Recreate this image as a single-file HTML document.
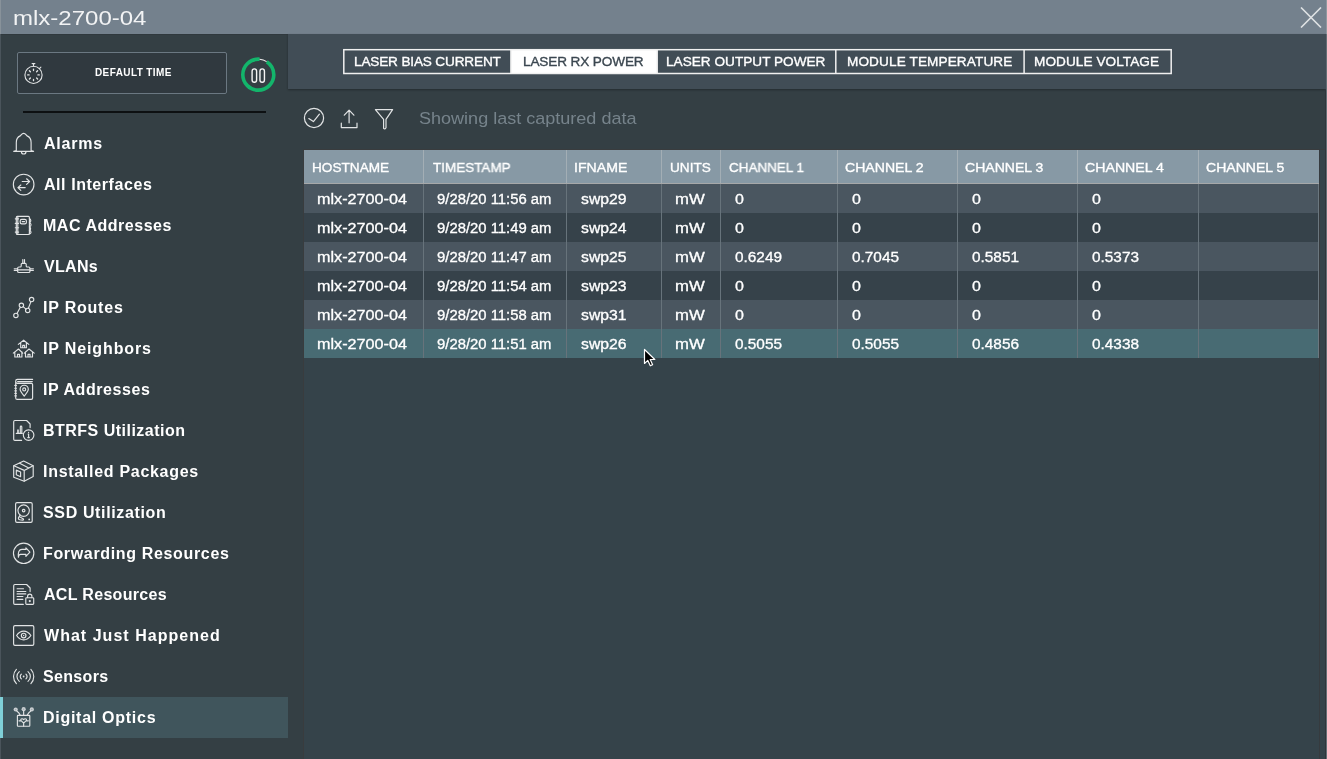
<!DOCTYPE html>
<html><head><meta charset="utf-8">
<style>
*{margin:0;padding:0;box-sizing:border-box}
html,body{width:1327px;height:759px;overflow:hidden;background:#343f44;font-family:"Liberation Sans",sans-serif;color:#fff}
div,svg{position:absolute}
.t{white-space:nowrap;line-height:20px;will-change:transform}
</style></head><body>

<div style="left:0;top:0;width:1327px;height:34px;background:#74818d"></div>
<div style="left:0;top:0;width:1px;height:34px;background:#88929a"></div>
<div style="left:0;top:34px;width:1327px;height:1px;background:#30393e"></div>
<div id="title" class="t" style="left:13.46px;top:7.82px;font-size:21px;font-weight:400;color:#f2f3f4;transform:scaleX(1.1435);transform-origin:0 0">mlx-2700-04</div>
<svg style="left:1300px;top:7px" width="22" height="21"><path d="M1 0.5L21 20.5M21 0.5L1 20.5" stroke="#dfe2e4" stroke-width="1.6"/></svg>
<div style="left:17px;top:52px;width:210px;height:42px;border:1px solid #6b7882;border-radius:2px;background:#30393f"></div>
<svg style="left:20px;top:60px" width="28" height="28"><g fill="none" stroke="#e2e4e5" stroke-width="1.1" stroke-linecap="round"><circle cx="13.5" cy="14.9" r="8.6"/><path d="M13.5 6.2V3.8M12.1 3.6H14.9M19.4 8.6L20.9 7.1"/><path d="M13.5 9.1V10.5M13.5 19.3V20.7M7.7 14.9H9.1M17.9 14.9H19.3M9.4 10.8L10.4 11.8M16.6 18L17.6 19M17.6 10.8L16.6 11.8M10.4 18L9.4 19" stroke-width="1.3"/></g></svg>
<div id="dt" class="t" style="left:94.80px;top:63.03px;font-size:10px;font-weight:700;color:#ffffff;letter-spacing:0.400px">DEFAULT TIME</div>
<svg style="left:238px;top:55px" width="40" height="40"><circle cx="20.3" cy="19.65" r="15.5" fill="none" stroke="#13b56b" stroke-width="3.6" stroke-dasharray="89.8 7.6" stroke-dashoffset="-8.93" transform="rotate(-90 20.3 19.65)"/><path d="M21.6 4.2A15.5 15.5 0 0 1 28.6 6.6" stroke="#eeeeee" stroke-width="1.1" fill="none"/><rect x="14.1" y="13.9" width="4.5" height="13.4" rx="2.25" fill="none" stroke="#f5f5f5" stroke-width="1.4"/><rect x="21.95" y="13.9" width="4.5" height="13.4" rx="2.25" fill="none" stroke="#f5f5f5" stroke-width="1.4"/></svg>
<div style="left:23px;top:111px;width:243px;height:2px;background:#0d1012"></div>
<svg style="left:0;top:123px" width="40" height="41"><path fill="none" stroke="#e2e4e5" stroke-width="1.15" stroke-linecap="round" stroke-linejoin="round" d="M16.3 27.6V19.5C16.3 15.8 18 13.8 20.2 12.9C21.2 12.4 21.6 10.4 23.65 10.4C25.7 10.4 26.1 12.4 27.1 12.9C29.3 13.8 31.1 15.8 31.1 19.5V27.6L33.6 28.3H13.7L16.3 27.6ZM21.4 28.4A2.3 2.6 0 0 0 26.0 28.4"/></svg>
<div id="side0" class="t" style="left:44.00px;top:133.66px;font-size:16px;font-weight:700;color:#ffffff;letter-spacing:0.800px">Alarms</div>
<svg style="left:0;top:164px" width="40" height="41"><circle fill="none" stroke="#e2e4e5" stroke-width="1.15" stroke-linecap="round" stroke-linejoin="round" cx="23.65" cy="20.5" r="10.3"/><path fill="none" stroke="#e2e4e5" stroke-width="1.15" stroke-linecap="round" stroke-linejoin="round" d="M22.2 17.5H29.5M26.6 14.8L29.6 17.5L26.6 20.3M25.2 23.6H18M20.8 21L17.9 23.6L20.8 26.3"/></svg>
<div id="side1" class="t" style="left:44.00px;top:174.66px;font-size:16px;font-weight:700;color:#ffffff;letter-spacing:0.562px">All Interfaces</div>
<svg style="left:0;top:205px" width="40" height="41"><rect fill="none" stroke="#e2e4e5" stroke-width="1.15" stroke-linecap="round" stroke-linejoin="round" x="16.3" y="11.4" width="13.1" height="18.1" rx="1"/><path fill="none" stroke="#e2e4e5" stroke-width="1.15" stroke-linecap="round" stroke-linejoin="round" d="M17.8 11.6V29.3M15.3 13.8H18.6M15.3 18.4H18.6M15.3 22.7H18.6M15.3 27.1H18.6"/><path fill="none" stroke="#e2e4e5" stroke-width="1.15" stroke-linecap="round" stroke-linejoin="round" d="M29.4 13.6A2.2 2.2 0 0 1 29.4 17.7A2.1 2.1 0 0 1 29.4 21.8A2.1 2.1 0 0 1 29.4 25.6A1.6 1.6 0 0 1 29.4 28.8"/><rect fill="none" stroke="#e2e4e5" stroke-width="1.15" stroke-linecap="round" stroke-linejoin="round" x="20.2" y="14.4" width="6.2" height="4.4" rx="1.6"/><path fill="none" stroke="#e2e4e5" stroke-width="1.15" stroke-linecap="round" stroke-linejoin="round" d="M22.2 16.6H24.6"/></svg>
<div id="side2" class="t" style="left:43.00px;top:215.66px;font-size:16px;font-weight:700;color:#ffffff;letter-spacing:0.525px">MAC Addresses</div>
<svg style="left:0;top:246px" width="40" height="41"><path fill="none" stroke="#e2e4e5" stroke-width="1.15" stroke-linecap="round" stroke-linejoin="round" d="M14.2 22.8H17.6M14.2 24.5H17.6M29.9 22.8H33.4M29.9 24.5H33.4M22.8 13.6V16.9M24.5 13.6V16.9"/><path fill="none" stroke="#e2e4e5" stroke-width="1.15" stroke-linecap="round" stroke-linejoin="round" d="M19 21H20.2C20.8 21 21.2 20.6 21.2 20V18.3C21.2 17.7 21.6 17.3 22.2 17.3H25.2C25.8 17.3 26.2 17.7 26.2 18.3V20C26.2 20.6 26.6 21 27.2 21H28.6C29.4 21 30 21.6 30 22.4V25.2C30 26 29.4 26.5 28.6 26.5H19C18.2 26.5 17.6 26 17.6 25.2V22.4C17.6 21.6 18.2 21 19 21Z"/><path fill="none" stroke="#e2e4e5" stroke-width="1.15" stroke-linecap="round" stroke-linejoin="round" d="M18.2 23.8H29.4"/></svg>
<div id="side3" class="t" style="left:44.00px;top:256.66px;font-size:16px;font-weight:700;color:#ffffff;letter-spacing:0.325px">VLANs</div>
<svg style="left:0;top:287px" width="40" height="41"><circle fill="none" stroke="#e2e4e5" stroke-width="1.15" stroke-linecap="round" stroke-linejoin="round" cx="15.9" cy="28.4" r="2.2"/><circle fill="none" stroke="#e2e4e5" stroke-width="1.15" stroke-linecap="round" stroke-linejoin="round" cx="21.4" cy="18.3" r="2.2"/><circle fill="none" stroke="#e2e4e5" stroke-width="1.15" stroke-linecap="round" stroke-linejoin="round" cx="27.7" cy="23.4" r="2.2"/><circle fill="none" stroke="#e2e4e5" stroke-width="1.15" stroke-linecap="round" stroke-linejoin="round" cx="31.6" cy="12.5" r="2.2"/><path fill="none" stroke="#e2e4e5" stroke-width="1.15" stroke-linecap="round" stroke-linejoin="round" d="M17 26.5L20.3 20.2M23.1 19.6L26 22.1M28.4 21.3L30.9 14.6"/></svg>
<div id="side4" class="t" style="left:43.00px;top:297.66px;font-size:16px;font-weight:700;color:#ffffff;letter-spacing:0.787px">IP Routes</div>
<svg style="left:0;top:328px" width="40" height="41"><path fill="none" stroke="#e2e4e5" stroke-width="1.15" stroke-linecap="round" stroke-linejoin="round" d="M18.3 16.4L23.65 12.2L28.8 16.4M20.7 14.8V19.7H26.4V14.8M22.7 19.5V17.4H24.6V19.5"/><path fill="none" stroke="#e2e4e5" stroke-width="1.15" stroke-linecap="round" stroke-linejoin="round" d="M13.3 25.1L18.5 21L22.7 25.1M14.8 23.7V29H21.9V23.7M17.5 29V26.3H19.5V29"/><path fill="none" stroke="#e2e4e5" stroke-width="1.15" stroke-linecap="round" stroke-linejoin="round" d="M24.4 25.1L29 21L34.2 25.1M25.5 23.7V29H32.5V23.7M28 29V26.3H30V29"/></svg>
<div id="side5" class="t" style="left:43.00px;top:338.66px;font-size:16px;font-weight:700;color:#ffffff;letter-spacing:0.864px">IP Neighbors</div>
<svg style="left:0;top:369px" width="40" height="41"><path fill="none" stroke="#e2e4e5" stroke-width="1.15" stroke-linecap="round" stroke-linejoin="round" d="M15.7 12.2C15.7 11 16.4 10.4 17.4 10.4H32.6M17.6 12.6H32.3M15.7 12.2V28.9C15.7 29.8 16.3 30.4 17.2 30.4H31.2C32 30.4 32.6 29.8 32.6 29V15.6C32.6 14.9 32.1 14.4 31.4 14.4H17.6C16.6 14.4 15.7 13.6 15.7 12.2"/><path fill="none" stroke="#e2e4e5" stroke-width="1.15" stroke-linecap="round" stroke-linejoin="round" d="M14.8 16.4H16.4M14.8 19.2H16.4M14.8 21.8H16.4M14.8 24.3H16.4M14.8 26.8H16.4"/><path fill="none" stroke="#e2e4e5" stroke-width="1.15" stroke-linecap="round" stroke-linejoin="round" d="M24.2 27.1C22 24.5 20.1 22.4 20.1 20.3A4.1 4.1 0 0 1 28.3 20.3C28.3 22.4 26.4 24.5 24.2 27.1Z"/><circle fill="none" stroke="#e2e4e5" stroke-width="1.15" stroke-linecap="round" stroke-linejoin="round" cx="24.2" cy="20.4" r="1.5"/></svg>
<div id="side6" class="t" style="left:43.00px;top:379.66px;font-size:16px;font-weight:700;color:#ffffff;letter-spacing:0.582px">IP Addresses</div>
<svg style="left:0;top:410px" width="40" height="41"><path fill="none" stroke="#e2e4e5" stroke-width="1.15" stroke-linecap="round" stroke-linejoin="round" d="M21.6 30.4H14.9C14.2 30.4 13.7 29.9 13.7 29.2V11.7C13.7 11 14.2 10.5 14.9 10.5H26.6L30.1 14V17.6"/><path fill="none" stroke="#e2e4e5" stroke-width="1.15" stroke-linecap="round" stroke-linejoin="round" d="M16.3 23.4H22.3M17.9 23.2V20.3M21.8 23.2V17C21.8 16.4 21.4 16.1 21 16.1C20.6 16.1 20.3 16.4 20.3 17V23.2"/><path d="M17.1 19.6H18.9V23H17.1Z" fill="#c9cdd0"/><circle fill="none" stroke="#e2e4e5" stroke-width="1.15" stroke-linecap="round" stroke-linejoin="round" cx="28.6" cy="25.1" r="5.3"/><path fill="none" stroke="#e2e4e5" stroke-width="1.15" stroke-linecap="round" stroke-linejoin="round" d="M28.6 24.1V27.4M27.8 27.6H29.4M28.1 24H28.7M28.6 22.2V22.5"/></svg>
<div id="side7" class="t" style="left:43.00px;top:420.66px;font-size:16px;font-weight:700;color:#ffffff;letter-spacing:0.488px">BTRFS Utilization</div>
<svg style="left:0;top:451px" width="40" height="41"><path fill="none" stroke="#e2e4e5" stroke-width="1.15" stroke-linecap="round" stroke-linejoin="round" d="M23.65 10.1L33.2 14.7V25.6L24.2 30.2L13.7 26.2V14.7Z"/><path fill="none" stroke="#e2e4e5" stroke-width="1.15" stroke-linecap="round" stroke-linejoin="round" d="M13.9 14.8L24.2 19.4L33.1 14.8M24.2 19.4V30.1M19.6 12.3L28.8 16.9"/><path fill="none" stroke="#e2e4e5" stroke-width="1.15" stroke-linecap="round" stroke-linejoin="round" d="M16.3 19.1L20.6 21V25.7L16.3 23.8Z"/></svg>
<div id="side8" class="t" style="left:43.00px;top:461.66px;font-size:16px;font-weight:700;color:#ffffff;letter-spacing:0.706px">Installed Packages</div>
<svg style="left:0;top:492px" width="40" height="41"><rect fill="none" stroke="#e2e4e5" stroke-width="1.15" stroke-linecap="round" stroke-linejoin="round" x="15.6" y="10.6" width="16.6" height="19.7" rx="1.4"/><circle fill="none" stroke="#e2e4e5" stroke-width="1.15" stroke-linecap="round" stroke-linejoin="round" cx="23.65" cy="18.6" r="5.7"/><circle fill="none" stroke="#e2e4e5" stroke-width="1.15" stroke-linecap="round" stroke-linejoin="round" cx="23.65" cy="18.6" r="1.3"/><path fill="none" stroke="#e2e4e5" stroke-width="1.15" stroke-linecap="round" stroke-linejoin="round" d="M20.2 23L18.7 25.2C18.1 26.2 18.4 27.6 19.8 27.8L22.8 28.1C23.6 28.1 23.8 27.2 23.1 26.8L19.4 24.8"/><circle cx="29.2" cy="27.4" r="0.9" fill="#e2e4e5"/></svg>
<div id="side9" class="t" style="left:43.00px;top:502.66px;font-size:16px;font-weight:700;color:#ffffff;letter-spacing:0.643px">SSD Utilization</div>
<svg style="left:0;top:533px" width="40" height="41"><circle fill="none" stroke="#e2e4e5" stroke-width="1.15" stroke-linecap="round" stroke-linejoin="round" cx="23.65" cy="20.3" r="10.2"/><path fill="none" stroke="#e2e4e5" stroke-width="1.15" stroke-linecap="round" stroke-linejoin="round" d="M18.4 24.3C17.9 19.3 18.8 16.4 22 16.4H25.9V14.8L29.9 19.2L25.9 23.4V21.4H20.6C19.3 21.4 18.6 22.5 18.4 24.3Z"/></svg>
<div id="side10" class="t" style="left:43.00px;top:543.66px;font-size:16px;font-weight:700;color:#ffffff;letter-spacing:0.658px">Forwarding Resources</div>
<svg style="left:0;top:574px" width="40" height="41"><path fill="none" stroke="#e2e4e5" stroke-width="1.15" stroke-linecap="round" stroke-linejoin="round" d="M23.3 30.4H14.9C14.2 30.4 13.7 29.9 13.7 29.2V11.7C13.7 11 14.2 10.5 14.9 10.5H26.6L30.1 14V17.6"/><path fill="none" stroke="#e2e4e5" stroke-width="1.15" stroke-linecap="round" stroke-linejoin="round" d="M17.1 14.7H23.5M17.1 17.5H25.8M17.1 19.9H25.8M17.1 22.5H22.9M17.1 25.3H22.9"/><rect fill="none" stroke="#e2e4e5" stroke-width="1.15" stroke-linecap="round" stroke-linejoin="round" x="25.8" y="23.7" width="7.9" height="6.6" rx="0.8"/><path fill="none" stroke="#e2e4e5" stroke-width="1.15" stroke-linecap="round" stroke-linejoin="round" d="M27.6 23.6V22.2A2.15 2.15 0 0 1 31.9 22.2V23.6"/><circle cx="29.8" cy="27.1" r="1.1" fill="#e2e4e5"/></svg>
<div id="side11" class="t" style="left:44.00px;top:584.66px;font-size:16px;font-weight:700;color:#ffffff;letter-spacing:0.317px">ACL Resources</div>
<svg style="left:0;top:615px" width="40" height="41"><rect fill="none" stroke="#e2e4e5" stroke-width="1.15" stroke-linecap="round" stroke-linejoin="round" x="13.6" y="10.6" width="20.2" height="19.8" rx="1.4"/><path fill="none" stroke="#e2e4e5" stroke-width="1.15" stroke-linecap="round" stroke-linejoin="round" d="M16.6 20.5C18.6 17.5 21 16.1 23.7 16.1C26.4 16.1 28.8 17.5 30.9 20.5C28.8 23.5 26.4 24.9 23.7 24.9C21 24.9 18.6 23.5 16.6 20.5Z"/><circle fill="none" stroke="#e2e4e5" stroke-width="1.15" stroke-linecap="round" stroke-linejoin="round" cx="23.65" cy="20.5" r="2.3"/><circle cx="23.65" cy="20.5" r="0.7" fill="#e2e4e5"/></svg>
<div id="side12" class="t" style="left:44.00px;top:625.66px;font-size:16px;font-weight:700;color:#ffffff;letter-spacing:1.029px">What Just Happened</div>
<svg style="left:0;top:656px" width="40" height="41"><path fill="none" stroke="#e2e4e5" stroke-width="1.15" stroke-linecap="round" stroke-linejoin="round" d="M16.4 13.4A10.2 10.2 0 0 0 16.4 27.6M30.9 13.4A10.2 10.2 0 0 1 30.9 27.6M19.3 15.6A6.3 6.3 0 0 0 19.3 25.4M28 15.6A6.3 6.3 0 0 1 28 25.4M21.3 18.2A3 3 0 0 0 21.3 22.8M26 18.2A3 3 0 0 1 26 22.8"/><circle cx="23.65" cy="20.5" r="0.9" fill="#e2e4e5"/></svg>
<div id="side13" class="t" style="left:43.00px;top:666.66px;font-size:16px;font-weight:700;color:#ffffff;letter-spacing:0.333px">Sensors</div>
<div style="left:0;top:697px;width:288px;height:41px;background:#40555c"></div>
<div style="left:0;top:697px;width:3px;height:41px;background:#7fd0d8"></div>
<svg style="left:0;top:697px" width="40" height="41"><rect fill="none" stroke="#e2e4e5" stroke-width="1.15" stroke-linecap="round" stroke-linejoin="round" x="17.4" y="18.3" width="12.4" height="10.9" rx="0.6"/><circle cx="15.7" cy="12.5" r="2.1" fill="#c9ced1"/><circle cx="23.65" cy="12.2" r="2.1" fill="#c9ced1"/><circle cx="31.8" cy="12.4" r="2.1" fill="#c9ced1"/><circle cx="15.7" cy="12.5" r="0.6" fill="#9aa5aa"/><circle cx="23.65" cy="12.2" r="0.6" fill="#9aa5aa"/><circle cx="31.8" cy="12.4" r="0.6" fill="#9aa5aa"/><path fill="none" stroke="#e2e4e5" stroke-width="1.15" stroke-linecap="round" stroke-linejoin="round" d="M16.7 13.9C18.5 15 19.6 16.5 20.2 18.2M23.65 13.9V18.2M30.8 13.9C29 15 27.9 16.5 27.2 18.2"/><path fill="none" stroke="#e2e4e5" stroke-width="1.15" stroke-linecap="round" stroke-linejoin="round" d="M19 23.8H21.1M26.2 23.8H28.4M23.65 26.2V29.1M23.65 26.2L21.1 23.6C20.5 22.7 21 21.7 22 21.7C22.8 21.7 23.3 22.1 23.65 22.6C24 22.1 24.5 21.7 25.3 21.7C26.3 21.7 26.8 22.7 26.2 23.6Z"/></svg>
<div id="side14" class="t" style="left:43.00px;top:707.66px;font-size:16px;font-weight:700;color:#ffffff;letter-spacing:0.723px">Digital Optics</div>
<div style="left:0;top:34px;width:1px;height:663px;background:#4a545b"></div>
<div style="left:0;top:738px;width:1px;height:21px;background:#4a545b"></div>
<div style="left:288px;top:34px;width:1038px;height:55px;background:#414d56;box-shadow:0 1px 2px rgba(0,0,0,0.32)"></div>
<div id="tab0" class="t" style="left:353.60px;top:51.69px;font-size:13.6px;font-weight:400;color:#ffffff;letter-spacing:-0.159px;-webkit-text-stroke:0.35px #ffffff">LASER BIAS CURRENT</div>
<div style="left:511px;top:49px;width:146px;height:25px;background:#fff"></div>
<div id="tab1" class="t" style="left:523.10px;top:51.69px;font-size:13.6px;font-weight:400;color:#3b4750;letter-spacing:-0.131px;-webkit-text-stroke:0.35px #3b4750">LASER RX POWER</div>
<div id="tab2" class="t" style="left:665.90px;top:51.69px;font-size:13.6px;font-weight:400;color:#ffffff;letter-spacing:0.018px;-webkit-text-stroke:0.35px #ffffff">LASER OUTPUT POWER</div>
<div id="tab3" class="t" style="left:846.60px;top:51.69px;font-size:13.6px;font-weight:400;color:#ffffff;letter-spacing:0.112px;-webkit-text-stroke:0.35px #ffffff">MODULE TEMPERATURE</div>
<div id="tab4" class="t" style="left:1034.40px;top:51.69px;font-size:13.6px;font-weight:400;color:#ffffff;letter-spacing:0.069px;-webkit-text-stroke:0.35px #ffffff">MODULE VOLTAGE</div>
<svg style="left:340px;top:46px" width="836" height="32"><g fill="none" stroke="#f0f0f0" stroke-width="1.5"><rect x="3.8" y="3.7" width="827.4" height="23.8"/><path d="M170.9 3.7V27.5M317.2 3.7V27.5M495.8 3.7V27.5M684.1 3.7V27.5"/></g></svg>
<svg style="left:298px;top:100px" width="110" height="34"><g fill="none" stroke="#e2e4e5" stroke-width="1.2" stroke-linecap="round" stroke-linejoin="round"><circle cx="16" cy="18" r="9.6"/><path d="M10.8 18.6L15.4 21.6L21.4 14.2"/><path d="M51.1 22.8V10.4M46.3 15.2L51.1 10.2L55.9 15.2M43.3 23.2V27.6H59V23.2"/><path d="M77.4 9.6H94.6L88 19.4V27.8Q86.9 29.6 85.6 28.4V19.4Z"/></g></svg>
<div id="msg" class="t" style="left:419.23px;top:108.58px;font-size:16.8px;font-weight:400;color:#76838b;transform:scaleX(1.0743);transform-origin:0 0">Showing last captured data</div>
<div style="left:303px;top:149px;width:1022px;height:610px;background:#35434a;border-left:1px solid #393c3e;border-top:1px solid #393c3e"></div>
<div style="left:304px;top:150px;width:1015px;height:34px;background:#8799a5;border-bottom:1px solid #a6a8a9"></div>
<div id="hdr0" class="t" style="left:312.00px;top:157.89px;font-size:13.6px;font-weight:400;color:#ffffff;transform:scaleX(1.0013);transform-origin:0 0;-webkit-text-stroke:0.35px #ffffff">HOSTNAME</div>
<div id="hdr1" class="t" style="left:432.50px;top:157.89px;font-size:13.6px;font-weight:400;color:#ffffff;transform:scaleX(0.9910);transform-origin:0 0;-webkit-text-stroke:0.35px #ffffff">TIMESTAMP</div>
<div id="hdr2" class="t" style="left:574.46px;top:157.89px;font-size:13.6px;font-weight:400;color:#ffffff;transform:scaleX(1.0380);transform-origin:0 0;-webkit-text-stroke:0.35px #ffffff">IFNAME</div>
<div id="hdr3" class="t" style="left:669.91px;top:157.89px;font-size:13.6px;font-weight:400;color:#ffffff;transform:scaleX(0.9897);transform-origin:0 0;-webkit-text-stroke:0.35px #ffffff">UNITS</div>
<div id="hdr4" class="t" style="left:728.81px;top:157.89px;font-size:13.6px;font-weight:400;color:#ffffff;transform:scaleX(0.9892);transform-origin:0 0;-webkit-text-stroke:0.35px #ffffff">CHANNEL 1</div>
<div id="hdr5" class="t" style="left:845.36px;top:157.89px;font-size:13.6px;font-weight:400;color:#ffffff;transform:scaleX(1.0365);transform-origin:0 0;-webkit-text-stroke:0.35px #ffffff">CHANNEL 2</div>
<div id="hdr6" class="t" style="left:965.27px;top:157.89px;font-size:13.6px;font-weight:400;color:#ffffff;transform:scaleX(1.0324);transform-origin:0 0;-webkit-text-stroke:0.35px #ffffff">CHANNEL 3</div>
<div id="hdr7" class="t" style="left:1085.36px;top:157.89px;font-size:13.6px;font-weight:400;color:#ffffff;transform:scaleX(1.0413);transform-origin:0 0;-webkit-text-stroke:0.35px #ffffff">CHANNEL 4</div>
<div id="hdr8" class="t" style="left:1206.47px;top:157.89px;font-size:13.6px;font-weight:400;color:#ffffff;transform:scaleX(1.0324);transform-origin:0 0;-webkit-text-stroke:0.35px #ffffff">CHANNEL 5</div>
<div style="left:304px;top:184px;width:1015px;height:29px;background:#4a5660"></div>
<div id="c0_0" class="t" style="left:317.14px;top:188.75px;font-size:14px;font-weight:400;color:#ffffff;transform:scaleX(1.1558);transform-origin:0 0;-webkit-text-stroke:0.3px #ffffff">mlx-2700-04</div>
<div id="c0_1" class="t" style="left:436.74px;top:188.75px;font-size:14px;font-weight:400;color:#ffffff;transform:scaleX(1.0604);transform-origin:0 0;-webkit-text-stroke:0.3px #ffffff">9/28/20 11:56 am</div>
<div id="c0_2" class="t" style="left:580.80px;top:188.75px;font-size:14px;font-weight:400;color:#ffffff;transform:scaleX(1.1250);transform-origin:0 0;-webkit-text-stroke:0.3px #ffffff">swp29</div>
<div id="c0_3" class="t" style="left:675.00px;top:188.75px;font-size:14px;font-weight:400;color:#ffffff;transform:scaleX(1.1958);transform-origin:0 0;-webkit-text-stroke:0.3px #ffffff">mW</div>
<div id="c0_4" class="t" style="left:735.10px;top:188.75px;font-size:14px;font-weight:400;color:#ffffff;transform:scaleX(1.1429);transform-origin:0 0;-webkit-text-stroke:0.3px #ffffff">0</div>
<div id="c0_5" class="t" style="left:851.70px;top:188.75px;font-size:14px;font-weight:400;color:#ffffff;transform:scaleX(1.1429);transform-origin:0 0;-webkit-text-stroke:0.3px #ffffff">0</div>
<div id="c0_6" class="t" style="left:971.60px;top:188.75px;font-size:14px;font-weight:400;color:#ffffff;transform:scaleX(1.1429);transform-origin:0 0;-webkit-text-stroke:0.3px #ffffff">0</div>
<div id="c0_7" class="t" style="left:1091.70px;top:188.75px;font-size:14px;font-weight:400;color:#ffffff;transform:scaleX(1.1429);transform-origin:0 0;-webkit-text-stroke:0.3px #ffffff">0</div>
<div style="left:304px;top:213px;width:1015px;height:29px;background:#36424a"></div>
<div id="c1_0" class="t" style="left:317.14px;top:217.75px;font-size:14px;font-weight:400;color:#ffffff;transform:scaleX(1.1558);transform-origin:0 0;-webkit-text-stroke:0.3px #ffffff">mlx-2700-04</div>
<div id="c1_1" class="t" style="left:436.74px;top:217.75px;font-size:14px;font-weight:400;color:#ffffff;transform:scaleX(1.0604);transform-origin:0 0;-webkit-text-stroke:0.3px #ffffff">9/28/20 11:49 am</div>
<div id="c1_2" class="t" style="left:580.80px;top:217.75px;font-size:14px;font-weight:400;color:#ffffff;transform:scaleX(1.1250);transform-origin:0 0;-webkit-text-stroke:0.3px #ffffff">swp24</div>
<div id="c1_3" class="t" style="left:675.00px;top:217.75px;font-size:14px;font-weight:400;color:#ffffff;transform:scaleX(1.1958);transform-origin:0 0;-webkit-text-stroke:0.3px #ffffff">mW</div>
<div id="c1_4" class="t" style="left:735.10px;top:217.75px;font-size:14px;font-weight:400;color:#ffffff;transform:scaleX(1.1429);transform-origin:0 0;-webkit-text-stroke:0.3px #ffffff">0</div>
<div id="c1_5" class="t" style="left:851.70px;top:217.75px;font-size:14px;font-weight:400;color:#ffffff;transform:scaleX(1.1429);transform-origin:0 0;-webkit-text-stroke:0.3px #ffffff">0</div>
<div id="c1_6" class="t" style="left:971.60px;top:217.75px;font-size:14px;font-weight:400;color:#ffffff;transform:scaleX(1.1429);transform-origin:0 0;-webkit-text-stroke:0.3px #ffffff">0</div>
<div id="c1_7" class="t" style="left:1091.70px;top:217.75px;font-size:14px;font-weight:400;color:#ffffff;transform:scaleX(1.1429);transform-origin:0 0;-webkit-text-stroke:0.3px #ffffff">0</div>
<div style="left:304px;top:242px;width:1015px;height:29px;background:#4a5660"></div>
<div id="c2_0" class="t" style="left:317.14px;top:246.75px;font-size:14px;font-weight:400;color:#ffffff;transform:scaleX(1.1558);transform-origin:0 0;-webkit-text-stroke:0.3px #ffffff">mlx-2700-04</div>
<div id="c2_1" class="t" style="left:436.74px;top:246.75px;font-size:14px;font-weight:400;color:#ffffff;transform:scaleX(1.0604);transform-origin:0 0;-webkit-text-stroke:0.3px #ffffff">9/28/20 11:47 am</div>
<div id="c2_2" class="t" style="left:580.80px;top:246.75px;font-size:14px;font-weight:400;color:#ffffff;transform:scaleX(1.1250);transform-origin:0 0;-webkit-text-stroke:0.3px #ffffff">swp25</div>
<div id="c2_3" class="t" style="left:675.00px;top:246.75px;font-size:14px;font-weight:400;color:#ffffff;transform:scaleX(1.1958);transform-origin:0 0;-webkit-text-stroke:0.3px #ffffff">mW</div>
<div id="c2_4" class="t" style="left:735.10px;top:246.75px;font-size:14px;font-weight:400;color:#ffffff;transform:scaleX(1.0976);transform-origin:0 0;-webkit-text-stroke:0.3px #ffffff">0.6249</div>
<div id="c2_5" class="t" style="left:851.70px;top:246.75px;font-size:14px;font-weight:400;color:#ffffff;transform:scaleX(1.0976);transform-origin:0 0;-webkit-text-stroke:0.3px #ffffff">0.7045</div>
<div id="c2_6" class="t" style="left:971.60px;top:246.75px;font-size:14px;font-weight:400;color:#ffffff;transform:scaleX(1.0976);transform-origin:0 0;-webkit-text-stroke:0.3px #ffffff">0.5851</div>
<div id="c2_7" class="t" style="left:1091.70px;top:246.75px;font-size:14px;font-weight:400;color:#ffffff;transform:scaleX(1.0976);transform-origin:0 0;-webkit-text-stroke:0.3px #ffffff">0.5373</div>
<div style="left:304px;top:271px;width:1015px;height:29px;background:#36424a"></div>
<div id="c3_0" class="t" style="left:317.14px;top:275.75px;font-size:14px;font-weight:400;color:#ffffff;transform:scaleX(1.1558);transform-origin:0 0;-webkit-text-stroke:0.3px #ffffff">mlx-2700-04</div>
<div id="c3_1" class="t" style="left:436.74px;top:275.75px;font-size:14px;font-weight:400;color:#ffffff;transform:scaleX(1.0604);transform-origin:0 0;-webkit-text-stroke:0.3px #ffffff">9/28/20 11:54 am</div>
<div id="c3_2" class="t" style="left:580.80px;top:275.75px;font-size:14px;font-weight:400;color:#ffffff;transform:scaleX(1.1250);transform-origin:0 0;-webkit-text-stroke:0.3px #ffffff">swp23</div>
<div id="c3_3" class="t" style="left:675.00px;top:275.75px;font-size:14px;font-weight:400;color:#ffffff;transform:scaleX(1.1958);transform-origin:0 0;-webkit-text-stroke:0.3px #ffffff">mW</div>
<div id="c3_4" class="t" style="left:735.10px;top:275.75px;font-size:14px;font-weight:400;color:#ffffff;transform:scaleX(1.1429);transform-origin:0 0;-webkit-text-stroke:0.3px #ffffff">0</div>
<div id="c3_5" class="t" style="left:851.70px;top:275.75px;font-size:14px;font-weight:400;color:#ffffff;transform:scaleX(1.1429);transform-origin:0 0;-webkit-text-stroke:0.3px #ffffff">0</div>
<div id="c3_6" class="t" style="left:971.60px;top:275.75px;font-size:14px;font-weight:400;color:#ffffff;transform:scaleX(1.1429);transform-origin:0 0;-webkit-text-stroke:0.3px #ffffff">0</div>
<div id="c3_7" class="t" style="left:1091.70px;top:275.75px;font-size:14px;font-weight:400;color:#ffffff;transform:scaleX(1.1429);transform-origin:0 0;-webkit-text-stroke:0.3px #ffffff">0</div>
<div style="left:304px;top:300px;width:1015px;height:29px;background:#4a5660"></div>
<div id="c4_0" class="t" style="left:317.14px;top:304.75px;font-size:14px;font-weight:400;color:#ffffff;transform:scaleX(1.1558);transform-origin:0 0;-webkit-text-stroke:0.3px #ffffff">mlx-2700-04</div>
<div id="c4_1" class="t" style="left:436.74px;top:304.75px;font-size:14px;font-weight:400;color:#ffffff;transform:scaleX(1.0604);transform-origin:0 0;-webkit-text-stroke:0.3px #ffffff">9/28/20 11:58 am</div>
<div id="c4_2" class="t" style="left:580.80px;top:304.75px;font-size:14px;font-weight:400;color:#ffffff;transform:scaleX(1.1250);transform-origin:0 0;-webkit-text-stroke:0.3px #ffffff">swp31</div>
<div id="c4_3" class="t" style="left:675.00px;top:304.75px;font-size:14px;font-weight:400;color:#ffffff;transform:scaleX(1.1958);transform-origin:0 0;-webkit-text-stroke:0.3px #ffffff">mW</div>
<div id="c4_4" class="t" style="left:735.10px;top:304.75px;font-size:14px;font-weight:400;color:#ffffff;transform:scaleX(1.1429);transform-origin:0 0;-webkit-text-stroke:0.3px #ffffff">0</div>
<div id="c4_5" class="t" style="left:851.70px;top:304.75px;font-size:14px;font-weight:400;color:#ffffff;transform:scaleX(1.1429);transform-origin:0 0;-webkit-text-stroke:0.3px #ffffff">0</div>
<div id="c4_6" class="t" style="left:971.60px;top:304.75px;font-size:14px;font-weight:400;color:#ffffff;transform:scaleX(1.1429);transform-origin:0 0;-webkit-text-stroke:0.3px #ffffff">0</div>
<div id="c4_7" class="t" style="left:1091.70px;top:304.75px;font-size:14px;font-weight:400;color:#ffffff;transform:scaleX(1.1429);transform-origin:0 0;-webkit-text-stroke:0.3px #ffffff">0</div>
<div style="left:304px;top:329px;width:1015px;height:29px;background:#486b73"></div>
<div id="c5_0" class="t" style="left:317.14px;top:333.75px;font-size:14px;font-weight:400;color:#ffffff;transform:scaleX(1.1558);transform-origin:0 0;-webkit-text-stroke:0.3px #ffffff">mlx-2700-04</div>
<div id="c5_1" class="t" style="left:436.74px;top:333.75px;font-size:14px;font-weight:400;color:#ffffff;transform:scaleX(1.0604);transform-origin:0 0;-webkit-text-stroke:0.3px #ffffff">9/28/20 11:51 am</div>
<div id="c5_2" class="t" style="left:580.80px;top:333.75px;font-size:14px;font-weight:400;color:#ffffff;transform:scaleX(1.1250);transform-origin:0 0;-webkit-text-stroke:0.3px #ffffff">swp26</div>
<div id="c5_3" class="t" style="left:675.00px;top:333.75px;font-size:14px;font-weight:400;color:#ffffff;transform:scaleX(1.1958);transform-origin:0 0;-webkit-text-stroke:0.3px #ffffff">mW</div>
<div id="c5_4" class="t" style="left:735.10px;top:333.75px;font-size:14px;font-weight:400;color:#ffffff;transform:scaleX(1.0976);transform-origin:0 0;-webkit-text-stroke:0.3px #ffffff">0.5055</div>
<div id="c5_5" class="t" style="left:851.70px;top:333.75px;font-size:14px;font-weight:400;color:#ffffff;transform:scaleX(1.0976);transform-origin:0 0;-webkit-text-stroke:0.3px #ffffff">0.5055</div>
<div id="c5_6" class="t" style="left:971.60px;top:333.75px;font-size:14px;font-weight:400;color:#ffffff;transform:scaleX(1.0976);transform-origin:0 0;-webkit-text-stroke:0.3px #ffffff">0.4856</div>
<div id="c5_7" class="t" style="left:1091.70px;top:333.75px;font-size:14px;font-weight:400;color:#ffffff;transform:scaleX(1.0976);transform-origin:0 0;-webkit-text-stroke:0.3px #ffffff">0.4338</div>
<div style="left:423px;top:150px;width:1px;height:33px;background:#a3aeb5"></div>
<div style="left:423px;top:184px;width:1px;height:174px;background:#67737b"></div>
<div style="left:566px;top:150px;width:1px;height:33px;background:#a3aeb5"></div>
<div style="left:566px;top:184px;width:1px;height:174px;background:#67737b"></div>
<div style="left:661px;top:150px;width:1px;height:33px;background:#a3aeb5"></div>
<div style="left:661px;top:184px;width:1px;height:174px;background:#67737b"></div>
<div style="left:720px;top:150px;width:1px;height:33px;background:#a3aeb5"></div>
<div style="left:720px;top:184px;width:1px;height:174px;background:#67737b"></div>
<div style="left:837px;top:150px;width:1px;height:33px;background:#a3aeb5"></div>
<div style="left:837px;top:184px;width:1px;height:174px;background:#67737b"></div>
<div style="left:957px;top:150px;width:1px;height:33px;background:#a3aeb5"></div>
<div style="left:957px;top:184px;width:1px;height:174px;background:#67737b"></div>
<div style="left:1077px;top:150px;width:1px;height:33px;background:#a3aeb5"></div>
<div style="left:1077px;top:184px;width:1px;height:174px;background:#67737b"></div>
<div style="left:1198px;top:150px;width:1px;height:33px;background:#a3aeb5"></div>
<div style="left:1198px;top:184px;width:1px;height:174px;background:#67737b"></div>
<div style="left:1319px;top:149px;width:1px;height:610px;background:#363b3f"></div>
<div style="left:1318px;top:184px;width:1px;height:174px;background:#6b777f"></div>
<div style="left:1325px;top:89px;width:1px;height:670px;background:#2e363b"></div>
<svg style="left:643px;top:348px" width="14" height="20"><path d="M1.5 1.5V15.5L4.8 12.4L7.3 17.8L9.6 16.8L7.2 11.5H11.8Z" fill="#000" stroke="#fff" stroke-width="1.2" stroke-linejoin="round"/></svg>
<div style="left:1326px;top:0;width:1px;height:34px;background:#8f989f"></div>
<div style="left:1326px;top:34px;width:1px;height:725px;background:#646e75"></div>
</body></html>
